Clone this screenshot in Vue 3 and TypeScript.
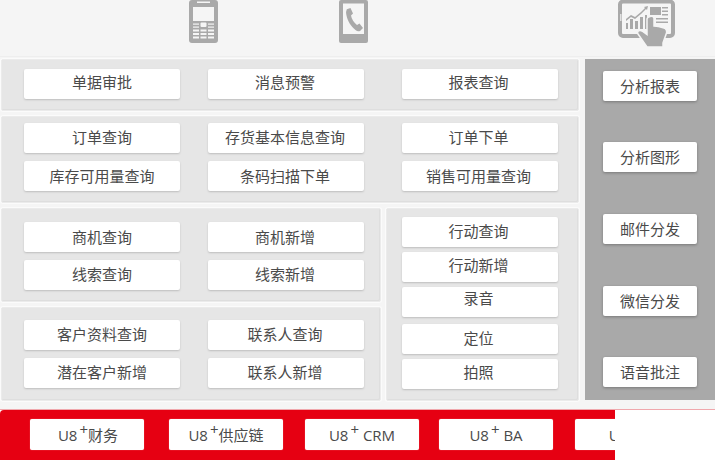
<script setup lang="ts">
const row1 = ['单据审批', '消息预警', '报表查询']
const row2 = ['订单查询', '存货基本信息查询', '订单下单', '库存可用量查询', '条码扫描下单', '销售可用量查询']
const opp = ['商机查询', '商机新增', '线索查询', '线索新增']
const cust = ['客户资料查询', '联系人查询', '潜在客户新增', '联系人新增']
const act = [
  { t: '行动查询', c: 'a0' },
  { t: '行动新增', c: 'a1' },
  { t: '录音', c: 'a2' },
  { t: '定位', c: 'a3' },
  { t: '拍照', c: 'a4' },
]
const side = ['分析报表', '分析图形', '邮件分发', '微信分发', '语音批注']
const foot = [
  { t: '财务', c: 'f0' },
  { t: '供应链', c: 'f1' },
  { t: ' CRM', c: 'f2' },
  { t: ' BA', c: 'f3' },
  { t: ' HR', c: 'f4' },
]
</script>

<template>
  <div class="page">
    <header class="head">
      <svg class="ic p1" width="30" height="44" viewBox="0 0 30 44">
        <path fill="#a9a9a9" d="M4 0h23a3 3 0 0 1 3 3v37a3 3 0 0 1-3 3H4a3 3 0 0 1-3-3V3a3 3 0 0 1 3-3z" />
        <rect x="5" y="7" width="21" height="14" fill="#f5f5f5" />
        <rect x="9" y="1.500" width="13" height="1.500" fill="#f5f5f5" />
        <rect x="12.500" y="22.500" width="6" height="4.500" rx="1" fill="#f5f5f5" />
        <g fill="#f5f5f5">
          <rect x="5" y="23.500" width="6" height="1.200" /><rect x="20" y="23.500" width="6" height="1.200" />
          <rect x="5" y="26.500" width="6" height="1.200" /><rect x="20" y="26.500" width="6" height="1.200" />
          <rect x="5" y="29.500" width="6" height="2" /><rect x="12.500" y="29.500" width="6" height="2" /><rect x="20" y="29.500" width="6" height="2" />
          <rect x="5" y="33" width="6" height="2" /><rect x="12.500" y="33" width="6" height="2" /><rect x="20" y="33" width="6" height="2" />
          <rect x="5" y="36.500" width="6" height="2" /><rect x="12.500" y="36.500" width="6" height="2" /><rect x="20" y="36.500" width="6" height="2" />
        </g>
      </svg>
      <svg class="ic p2" width="30" height="44" viewBox="0 0 30 44">
        <path fill="#a9a9a9" d="M3 0h25a2 2 0 0 1 2 2v39a2 2 0 0 1-2 2H3a2 2 0 0 1-2-2V2a2 2 0 0 1 2-2z" />
        <path fill="#f5f5f5" d="M5 3.500h21v30.500H5z" />
        <path fill="#a9a9a9" d="M8 9.500l4.500-1.500 2.500 5.500-2 2c.5 3.500 3 7 6 9.500l2.500-1.500 3.500 4.500-3 3c-1.500.7-3 .3-4.500-1-4.500-3.500-8-9-9-14.500-.5-2.500-.8-4.500.5-6z" />
      </svg>
      <svg class="ic p3" width="60" height="48" viewBox="0 0 60 48">
        <path fill="none" stroke="#a9a9a9" stroke-width="4" d="M6 1.500h47a3 3 0 0 1 3 3v28.500a3 3 0 0 1-3 3H6a3 3 0 0 1-3-3V4.500a3 3 0 0 1 3-3z" />
        <rect x="3" y="14" width="1.500" height="7" fill="#e0e0e0" />
        <g fill="#a9a9a9">
          <path d="M9 19l5-4 4 2 6-5 4-4-1-1 4-1-1 4-1-1-5 5-6 5-4-2-5 4z" />
          <path d="M9 23h2v6H9zM13 19h3v10h-3zM18 21h3v8h-3zM23 17h3v12h-3zM28 15h2v14h-2z" />
          <rect x="33" y="7" width="11" height="8" />
          <path d="M45 7h6v1.500h-6zM45 10.500h6v1.500h-6zM45 14h6v1.500h-6zM39 18h12v1.500H39zM39 21.500h12v1.500H39z" />
        </g>
        <path fill="#a9a9a9" stroke="#f5f5f5" stroke-width="1.500" d="M33 16.500c2-.7 4 0 4 2V26c3 0 7 1 10 2 2 .7 3 2.500 2.500 5L46 43v4H30L21 34c-1.500-2.500 1.500-4.500 4-3l5 3.500V19c0-1.500 1.500-2 3-2.500z" />
      </svg>
    </header>

    <div class="main">
      <div class="left">
        <section class="panel p-a">
          <button v-for="t in row1" :key="t" class="btn">{{ t }}</button>
        </section>
        <section class="panel p-b">
          <button v-for="t in row2" :key="t" class="btn">{{ t }}</button>
        </section>
        <div class="split">
          <div class="stack">
            <section class="panel p-c">
              <button v-for="t in opp" :key="t" class="btn">{{ t }}</button>
            </section>
            <section class="panel p-d">
              <button v-for="t in cust" :key="t" class="btn">{{ t }}</button>
            </section>
          </div>
          <section class="panel p-e">
            <button v-for="a in act" :key="a.t" class="btn" :class="a.c">{{ a.t }}</button>
          </section>
        </div>
      </div>
      <aside class="side">
        <button v-for="t in side" :key="t" class="btn sbtn">{{ t }}</button>
      </aside>
    </div>

    <div class="bottom">
      <nav class="foot">
        <button v-for="f in foot" :key="f.c" class="fbtn" :class="f.c">U8<sup>+</sup>{{ f.t }}</button>
      </nav>
    </div>
  </div>
</template>

<style>
html, body { margin: 0; background: #fff; }
</style>

<style scoped>
.page {
  width: 715px;
  height: 460px;
  overflow: hidden;
  background: #f5f5f5;
  font-family: "Noto Sans CJK SC", "Open Sans", sans-serif;
  font-size: 15px;
  color: #4a4a4a;
}
.head {
  height: 57px;
  display: flex;
  align-items: flex-start;
  box-sizing: border-box;
  border-bottom: 1px solid #eeeeee;
}
.ic { display: block; flex: none; }
.p1 { margin-left: 188px; }
.p2 { margin-left: 120px; }
.p3 { margin-left: 249px; }
.main {
  display: flex;
  padding: 2px 0 0 1px;
  height: 350px;
  box-sizing: border-box;
}
.left { width: 578px; flex: none; }
.panel {
  box-sizing: border-box;
  background: #e6e6e6;
  border: 1px solid #ebebeb;
  border-radius: 2px;
  box-shadow: 0 0 0 1px #fbfbfb, inset -1px -1px 0 #dedede;
}
.btn {
  display: block;
  box-sizing: border-box;
  width: 156px;
  height: 30px;
  padding: 0 0 2px;
  border: 0;
  border-radius: 2px;
  background: #fff;
  box-shadow: 0 1px 2px #bdbdbd;
  font: inherit;
  color: inherit;
  text-align: center;
  line-height: 26px;
}
.p-a, .p-b {
  display: grid;
  grid-template-columns: 156px 156px 156px;
  align-content: start;
  column-gap: 28px;
  padding: 9px 0 0 22px;
}
.p-a .btn:nth-child(3n+2), .p-b .btn:nth-child(3n+2), .p-c .btn:nth-child(even), .p-d .btn:nth-child(even) {
  padding-right: 2px;
}
.p-a .btn { padding-bottom: 4px; }
.p-a .btn:nth-child(2) { padding-right: 2px; }
.p-a .btn:nth-child(3), .p-b .btn:nth-child(3n) { margin-left: 10px; padding-right: 3px; }
.p-b .btn:nth-child(n+4) { padding-bottom: 0; }
.p-a { height: 52px; }
.p-b { height: 87px; margin-top: 5px; padding-top: 6px; row-gap: 8px; }
.split {
  display: flex;
  gap: 5px;
  margin-top: 5px;
}
.stack { width: 380px; flex: none; }
.p-c, .p-d {
  display: grid;
  grid-template-columns: 156px 156px;
  align-content: start;
  column-gap: 28px;
  row-gap: 8px;
  height: 94px;
  padding: 13px 0 0 22px;
}
.p-c .btn:nth-child(-n+2) { padding-bottom: 0; }
.p-d { margin-top: 5px; padding-top: 12px; }
.p-e {
  width: 193px;
  height: 193px;
  padding: 8px 0 0 15px;
}
.p-e .btn { padding-right: 3px; }
.a1 { margin-top: 5px; padding-bottom: 4px; }
.a2 { margin-top: 5px; padding-bottom: 8px; line-height: 20px; }
.a3 { margin-top: 7px; }
.a4 { margin-top: 5px; padding-bottom: 4px; }
.side {
  width: 130px;
  height: 341px;
  flex: none;
  margin-left: 6px;
  box-sizing: border-box;
  background: #a9a9a9;
  padding: 12px 0 0 18px;
  display: flex;
  flex-direction: column;
}
.sbtn { width: 94px; box-shadow: 0 1px 3px #777; flex: none; margin-bottom: 41px; padding-bottom: 1px; }
.sbtn:nth-child(3) { margin-top: 1px; }
.sbtn:nth-child(4) { margin-top: 1px; }
.bottom {
  height: 51px;
  margin-top: 2px;
  background: #fff;
  border-top: 1px solid #f0a8ad;
  box-sizing: border-box;
}
.foot {
  width: 615px;
  height: 50px;
  overflow: hidden;
  background: #e60012;
  border-radius: 4px 0 0 0;
  display: flex;
  padding: 9px 0 0 30px;
  box-sizing: border-box;
}
.fbtn {
  flex: none;
  width: 114px;
  height: 31px;
  padding: 0;
  border: 0;
  border-radius: 2px;
  background: #fff;
  font-family: "Open Sans", "Noto Sans CJK SC", sans-serif;
  font-size: 15px;
  color: #4a4a4a;
  white-space: pre;
  box-shadow: 0 0 1px #f5a0a5;
}
.f0 { padding-left: 2px; }
.f1 { margin-left: 25px; }
.f2 { margin-left: 22px; }
.f3 { margin-left: 20px; }
.f4 { margin-left: 22px; padding-left: 8px; }
.fbtn sup { font-size: 15px; line-height: 0; vertical-align: 6px; margin-left: 2px; }
</style>
